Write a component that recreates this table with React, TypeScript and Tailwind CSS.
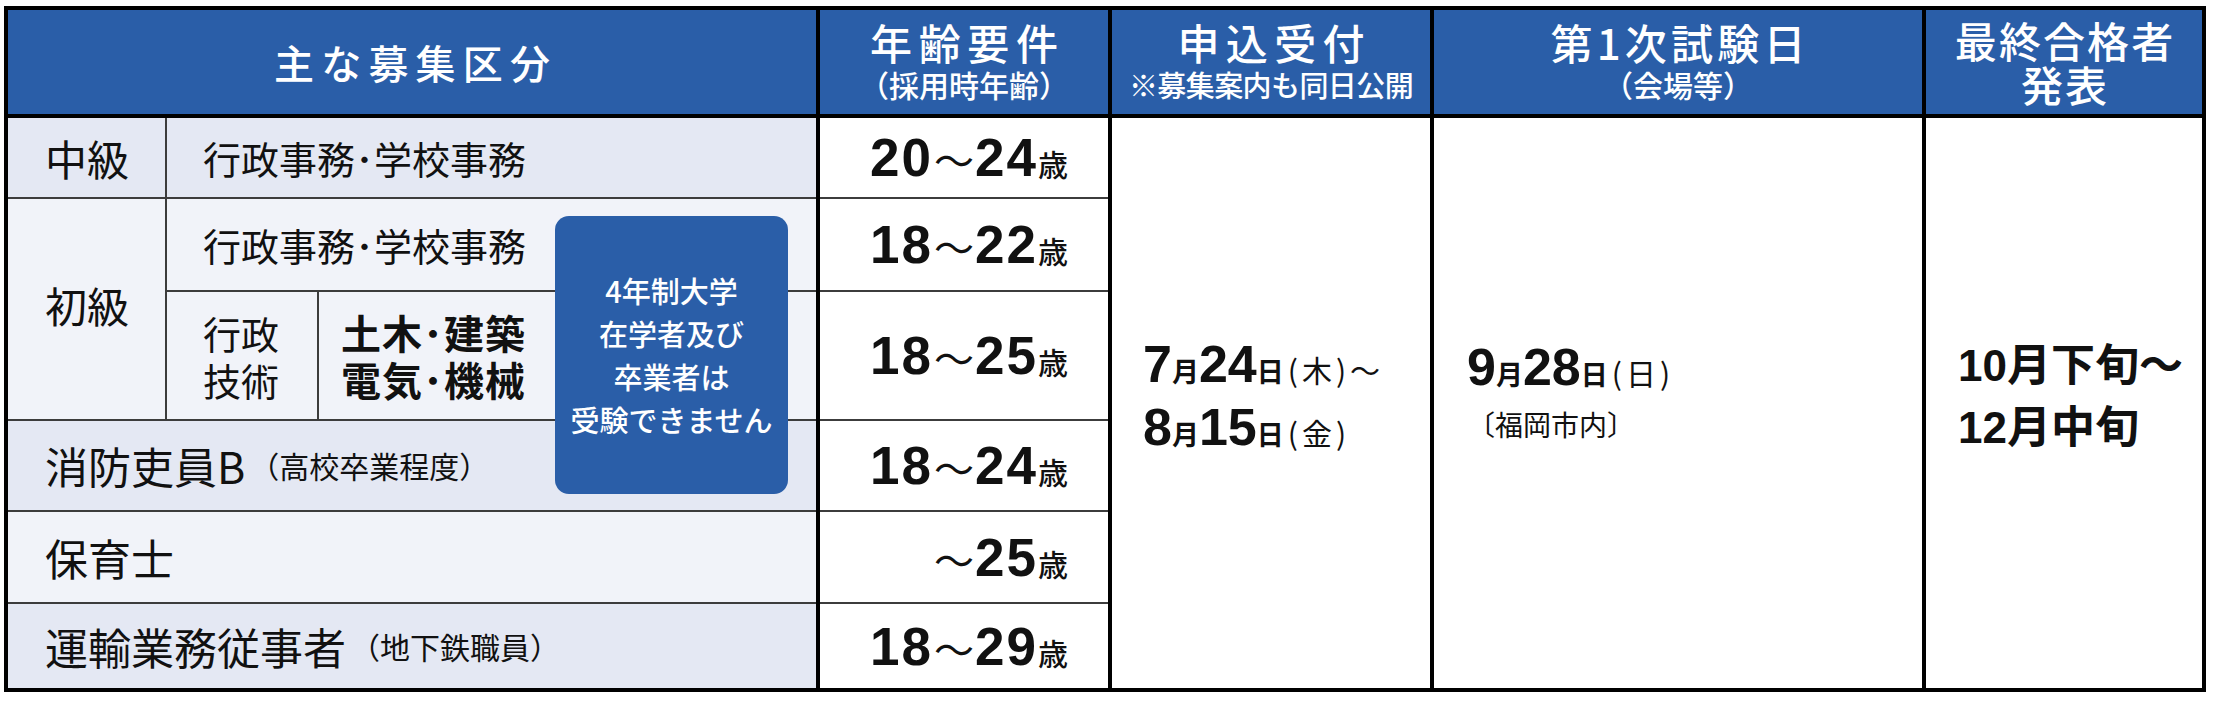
import React from "react";

const jp = "font-['Noto_Sans_CJK_JP',sans-serif]";
const num = "font-['Liberation_Sans','Noto_Sans_CJK_JP',sans-serif] font-bold";

const dark = "bg-[#e4e8f3]";
const light = "bg-[#f1f3f9]";

function Age({ from, to, h, last }: { from?: string; to: string; h: string; last?: boolean }) {
  return (
    <div className={`${h} ${last ? "" : "border-b-2 border-[#3c3c3c]"} flex items-center justify-end pr-[40px]`}>
      <div className="flex items-baseline leading-none">
        {from ? <span className={`${num} text-[53px] tracking-[2px]`}>{from}</span> : null}
        <span className="text-[40px] mx-[1px]">～</span>
        <span className={`${num} text-[53px] tracking-[2px]`}>{to}</span>
        <span className="text-[30px] font-medium">歳</span>
      </div>
    </div>
  );
}

function DayLine({ m, d, w, tilde }: { m: string; d: string; w: string; tilde?: boolean }) {
  return (
    <div className="flex items-baseline leading-[56px]">
      <span className={`${num} text-[52px]`}>{m}</span>
      <span className="text-[27px] font-bold">月</span>
      <span className={`${num} text-[52px]`}>{d}</span>
      <span className="text-[27px] font-bold">日</span>
      <span className="text-[30px] ml-[4px] tracking-[4px]">({w})</span>
      {tilde ? <span className="text-[30px]">～</span> : null}
    </div>
  );
}

export default function App() {
  return (
    <div className={`w-[2214px] h-[701px] bg-white overflow-hidden ${jp} text-[#111]`}>
      <div className="ml-[4px] mt-[6px] w-[2202px] border-4 border-black">
        {/* header */}
        <div className="flex h-[108px] border-b-4 border-black bg-[#2a5ea8] text-white font-medium">
          <div className="w-[812px] border-r-4 border-black flex items-center justify-center">
            <span className="text-[40px] tracking-[0.18em] pl-[0.18em]">主な募集区分</span>
          </div>
          <div className="w-[292px] border-r-4 border-black flex flex-col items-center justify-center pb-[2px]">
            <span className="text-[42px] leading-[46px] tracking-[0.16em] pl-[0.16em]">年齢要件</span>
            <span className="text-[30px] leading-[38px]">（採用時年齢）</span>
          </div>
          <div className="w-[322px] border-r-4 border-black flex flex-col items-center justify-center pb-[2px]">
            <span className="text-[42px] leading-[46px] tracking-[0.15em] pl-[0.15em]">申込受付</span>
            <span className="text-[29px] leading-[38px] tracking-[-0.02em]">※募集案内も同日公開</span>
          </div>
          <div className="w-[492px] border-r-4 border-black flex flex-col items-center justify-center pb-[2px]">
            <span className="text-[42px] leading-[46px] tracking-[0.1em] pl-[0.1em]">第1次試験日</span>
            <span className="text-[30px] leading-[38px]">（会場等）</span>
          </div>
          <div className="flex-1 flex flex-col items-center justify-center">
            <span className="text-[42px] leading-[44px] tracking-[0.05em] pl-[0.05em]">最終合格者</span>
            <span className="text-[42px] leading-[44px] tracking-[0.05em] pl-[0.05em]">発表</span>
          </div>
        </div>

        {/* body */}
        <div className="flex h-[570px]">
          {/* 区分 */}
          <div className="relative w-[812px] border-r-4 border-black flex flex-col">
            <div className={`h-[81px] border-b-2 border-[#3c3c3c] flex ${dark}`}>
              <div className="w-[159px] border-r-2 border-[#3c3c3c] flex items-center pl-[37px] text-[42px]">中級</div>
              <div className="flex-1 flex items-center pl-[36px] text-[38px]">行政事務･学校事務</div>
            </div>
            <div className={`h-[222px] border-b-2 border-[#3c3c3c] flex ${light}`}>
              <div className="w-[159px] border-r-2 border-[#3c3c3c] flex items-center pl-[37px] pb-[10px] text-[42px]">初級</div>
              <div className="flex-1 flex flex-col">
                <div className="h-[93px] border-b-2 border-[#3c3c3c] flex items-center pl-[36px] text-[38px]">行政事務･学校事務</div>
                <div className="flex-1 flex">
                  <div className="w-[152px] border-r-2 border-[#3c3c3c] flex flex-col justify-center pl-[36px] text-[38px] leading-[47px]">
                    <span>行政</span>
                    <span>技術</span>
                  </div>
                  <div className="flex-1 flex flex-col justify-center pl-[22px] text-[40px] font-bold leading-[47px] tracking-[1px]">
                    <span>土木･建築</span>
                    <span>電気･機械</span>
                  </div>
                </div>
              </div>
            </div>
            <div className={`h-[91px] border-b-2 border-[#3c3c3c] flex items-center pl-[37px] ${dark}`}>
              <span className="text-[43px]">消防吏員B</span>
              <span className="text-[30px] ml-[4px]">（高校卒業程度）</span>
            </div>
            <div className={`h-[92px] border-b-2 border-[#3c3c3c] flex items-center pl-[37px] ${light}`}>
              <span className="text-[43px]">保育士</span>
            </div>
            <div className={`flex-1 flex items-center pl-[37px] ${dark}`}>
              <span className="text-[43px]">運輸業務従事者</span>
              <span className="text-[30px] ml-[4px]">（地下鉄職員）</span>
            </div>

            <div className="absolute left-[547px] top-[98px] w-[233px] h-[278px] rounded-[14px] bg-[#2a5ea8] text-white flex flex-col items-center justify-center text-[29px] font-medium leading-[43px]">
              <span>4年制大学</span>
              <span>在学者及び</span>
              <span>卒業者は</span>
              <span>受験できません</span>
            </div>
          </div>

          {/* 年齢 */}
          <div className="w-[292px] border-r-4 border-black flex flex-col bg-white">
            <Age from="20" to="24" h="h-[81px]" />
            <Age from="18" to="22" h="h-[93px]" />
            <Age from="18" to="25" h="h-[129px]" />
            <Age from="18" to="24" h="h-[91px]" />
            <Age to="25" h="h-[92px]" />
            <Age from="18" to="29" h="flex-1" last />
          </div>

          {/* 申込受付 */}
          <div className="w-[322px] border-r-4 border-black flex flex-col justify-center pl-[31px] pb-[8px]">
            <DayLine m="7" d="24" w="木" tilde />
            <DayLine m="8" d="15" w="金" />
          </div>

          {/* 第1次試験日 */}
          <div className="w-[492px] border-r-4 border-black flex flex-col justify-center pl-[33px] pb-[22px]">
            <DayLine m="9" d="28" w="日" />
            <div className="text-[28px] leading-[44px]">〔福岡市内〕</div>
          </div>

          {/* 最終合格者発表 */}
          <div className="flex-1 flex flex-col justify-center pl-[32px] pb-[16px] font-bold text-[44px] leading-[58px]">
            <span><span className={num}>10</span>月下旬～</span>
            <span><span className={num}>12</span>月中旬</span>
          </div>
        </div>
      </div>
    </div>
  );
}
